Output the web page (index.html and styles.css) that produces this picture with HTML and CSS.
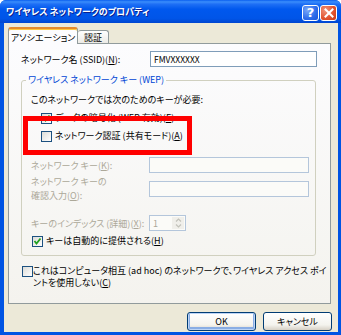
FILE: index.html
```html
<!DOCTYPE html>
<html lang="ja">
<head>
<meta charset="utf-8">
<link rel="stylesheet" href="styles.css">
</head>
<body>
<div class="window">
  <div class="titlebar">
    <span class="title">ワイヤレス ネットワークのプロパティ</span>
    <div class="tbtns">
      <span class="tbtn help">?</span>
      <span class="tbtn close"><svg width="10" height="10" viewBox="0 0 10 10"><path d="M1.5 1.5 L8.5 8.5 M8.5 1.5 L1.5 8.5" stroke="#fff" stroke-width="2" stroke-linecap="square"/></svg></span>
    </div>
  </div>
  <div class="client">
    <div class="tabs">
      <div class="tab sel">アソシエーション</div>
      <div class="tab">認証</div>
    </div>
    <div class="panel">
      <div class="row ssid">
        <span class="lbl">ネットワーク名 (SSID)(<u>N</u>):</span>
        <span class="input wide">FMVXXXXXX</span>
      </div>
      <fieldset class="group">
        <legend>ワイヤレス ネットワーク キー (WEP)</legend>
        <div class="line need">このネットワークでは次のためのキーが必要:</div>
        <div class="line cbrow indent"><span class="cb checked"><svg width="9" height="9" viewBox="0 0 9 9"><path d="M1.5 4 L3.5 6.5 L7.5 1.5" stroke="#21A121" stroke-width="1.8" fill="none"/></svg></span>データの暗号化 (WEP 有効)(<u>E</u>)</div>
        <div class="line cbrow indent"><span class="cb"></span>ネットワーク認証 (共有モード)(<u>A</u>)</div>
        <div class="frow key">
          <span class="lbl dis">ネットワーク キー(<u>K</u>):</span>
          <span class="input disin"></span>
        </div>
        <div class="frow confirm">
          <span class="lbl dis two">ネットワーク キーの<br>確認入力(<u>O</u>):</span>
          <span class="input disin"></span>
        </div>
        <div class="frow idx">
          <span class="lbl dis">キーのインデックス (詳細)(<u>X</u>):</span>
          <span class="input spin"><span class="val">1</span><span class="arrows"><svg width="7" height="12" viewBox="0 0 7 12"><path d="M1 4.5 L3.5 2 L6 4.5" stroke="#C2C2BA" stroke-width="1.2" fill="none"/><path d="M1 7.5 L3.5 10 L6 7.5" stroke="#C2C2BA" stroke-width="1.2" fill="none"/></svg></span></span>
        </div>
        <div class="line cbrow auto"><span class="cb checked"><svg width="9" height="9" viewBox="0 0 9 9"><path d="M1.5 4 L3.5 6.5 L7.5 1.5" stroke="#21A121" stroke-width="1.8" fill="none"/></svg></span>キーは自動的に提供される(<u>H</u>)</div>
      </fieldset>
      <div class="adhoc"><span class="cb"></span><span class="adtext">これはコンピュータ相互 (ad hoc) のネットワークで、ワイヤレス アクセス ポイ<br>ントを使用しない(<u>C</u>)</span></div>
      <div class="redbox"></div>
    </div>
    <div class="buttons">
      <span class="btn def">OK</span>
      <span class="btn">キャンセル</span>
    </div>
  </div>
</div>
</body>
</html>
```
FILE: styles.css
```css
* { box-sizing: border-box; }
html, body { margin: 0; padding: 0; }
body {
  font-family: "Noto Sans CJK JP", "Noto Sans", sans-serif;
  font-size: 9px;
  font-feature-settings: "palt";
  color: #000;
  background: #fff;
}
u { text-decoration: underline; text-underline-offset: 1px; }
.window {
  width: 341px;
  height: 335px;
  background: #0054E3;
  display: flex;
  flex-direction: column;
  border-radius: 6px 6px 0 0;
  overflow: hidden;
}
.titlebar {
  height: 23px;
  flex: none;
  display: flex;
  align-items: center;
  justify-content: space-between;
  padding: 0 4px 0 6px;
  background: linear-gradient(#0A5FEF 0%, #3A8DFB 8%, #1E6FF5 18%, #0058EE 40%, #0055E8 80%, #0046D0 100%);
}
.title {
  color: #fff;
  font-weight: bold;
  font-size: 9px;
  text-shadow: 1px 1px 0 #0A1E8C;
  white-space: nowrap;
}
.tbtns { display: flex; gap: 1px; margin-top: 2px; }
.tbtn {
  width: 17px;
  height: 16px;
  border: 1px solid #fff;
  border-radius: 3px;
  display: flex;
  align-items: center;
  justify-content: center;
  color: #fff;
  font-family: "DejaVu Sans", sans-serif;
  font-weight: bold;
  font-size: 13px;
  line-height: 1;
}
.help { background: radial-gradient(circle at 30% 30%, #7AA8F8, #2D6BEA 60%, #1D55D8); }
.close { background: radial-gradient(circle at 30% 30%, #F0937A, #E0502C 60%, #C53A1A); }
.client {
  flex: 1;
  margin: 0 3px 3px 4px;
  background: #ECE9D8;
  padding: 4px 7px 0 4px;
  display: flex;
  flex-direction: column;
}
.tabs {
  height: 16px;
  display: flex;
  align-items: flex-end;
  flex: none;
}
.tab {
  height: 13px;
  padding: 0 5px;
  border: 1px solid #919B9C;
  border-bottom: none;
  border-radius: 3px 3px 0 0;
  background: linear-gradient(#FFFFFF, #ECEBE6);
  display: flex;
  align-items: center;
  justify-content: center;
  white-space: nowrap;
}
.tab.sel {
  width: 70px;
  height: 17px;
  margin-bottom: -1px;
  position: relative;
  z-index: 1;
  background: #FCFCFE;
  border-top: 2px solid #E68B2C;
  box-shadow: inset 0 1px 0 #FFC83C;
  padding-top: 1px;
}
.tab:not(.sel) { width: 31px; border-left: none; }
.panel {
  position: relative;
  height: 261px;
  flex: none;
  border: 1px solid #919B9C;
  background: linear-gradient(#FCFCFE, #F4F3EE);
  padding: 7px 13px 0 12px;
}
.row { display: flex; align-items: center; }
.ssid { height: 16px; }
.ssid .lbl { width: 129px; }
.input {
  height: 16px;
  border: 1px solid #7F9DB9;
  background: #fff;
  display: flex;
  align-items: center;
  padding-left: 3px;
}
.wide { width: 167px; font-size: 8.5px; }
.group {
  margin: 7px 1px 0 0;
  padding: 0 0 8px 9px;
  border: 1px solid #D0D0BF;
  border-radius: 3px;
  min-width: 0;
}
.group legend {
  color: #0046D5;
  padding: 0 2px;
  margin-left: -5px;
  line-height: 12px;
}
.line { height: 12px; line-height: 12px; display: flex; align-items: center; white-space: nowrap; }
.need { margin-top: 8px; }
.cbrow.indent { margin-top: 6px; padding-left: 10px; }
.cb {
  width: 11px;
  height: 11px;
  flex: none;
  border: 1px solid #1C5180;
  background: linear-gradient(135deg, #DCDCD7, #FFFFFF);
  margin-right: 3px;
  display: flex;
  align-items: center;
  justify-content: center;
}
.frow {
  display: grid;
  grid-template-columns: 118px 160px;
  align-items: center;
}
.key { margin-top: 15px; }
.confirm { margin-top: 2px; align-items: start; }
.confirm .input { margin-top: 6px; }
.lbl { white-space: nowrap; }
.dis { color: #ACA899; }
.two { line-height: 14px; }
.disin { border-color: #B4C6DB; background: #FBFBF8; }
.idx { margin-top: 12px; }
.spin {
  width: 37px;
  justify-content: space-between;
  padding: 1px;
  padding-left: 3px;
  color: #ACA899;
  background: #FBFBF8;
  border-color: #B4C6DB;
}
.arrows {
  width: 12px;
  height: 12px;
  display: flex;
  align-items: center;
  justify-content: center;
  background: #F0EFEA;
}
.auto { margin-top: 4px; padding-left: 1px; }
.adhoc {
  display: flex;
  align-items: flex-start;
  margin-top: 9px;
  padding-left: 1px;
  white-space: nowrap;
  line-height: 12px;
}
.adhoc .cb { margin-top: 1px; margin-right: 0; }
.redbox {
  position: absolute;
  left: 14px;
  top: 72px;
  width: 169px;
  height: 39px;
  border: 5px solid #FF0000;
}
.buttons {
  display: flex;
  justify-content: flex-end;
  gap: 7px;
  margin-top: 8px;
  margin-right: -1px;
}
.btn {
  width: 69px;
  height: 19px;
  border: 1px solid #003C74;
  border-radius: 3px;
  background: linear-gradient(#FFFFFF, #F4F3EE 70%, #D6D0C5);
  display: flex;
  align-items: center;
  justify-content: center;
}
.btn.def { box-shadow: inset 0 0 0 1px #BCD4F6, inset 0 -1px 0 2px #89ADE4; }
```
